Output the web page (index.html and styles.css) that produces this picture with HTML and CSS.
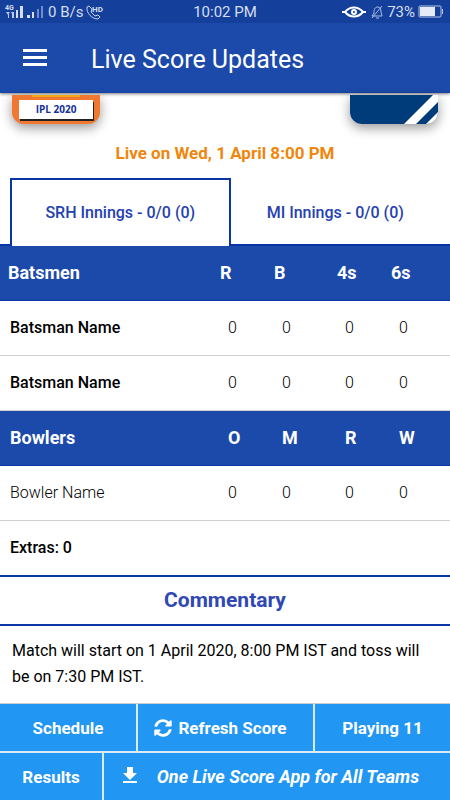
FILE: index.html
```html
<!DOCTYPE html>
<html lang="en">
<head>
  <meta charset="UTF-8">
  <title>Live Score Updates</title>
  <meta name="viewport" content="width=device-width, initial-scale=1.0">
  <link rel="stylesheet" href="styles.css">
</head>
<body>
<header class="top">
  <div class="status">
    <div class="status-left">
      <svg width="48" height="16" viewBox="0 2 48 16" aria-hidden="true">
        <text x="5" y="8" class="net">4G</text>
        <path d="M6 10h4l-2 3zM8 12h1v4H8zM11 10h3v6h-2v-4z" fill="#b9c8ec"/>
        <path d="M16 8h2v8h-2zM20 4h3v12h-3z" fill="#d5def3"/>
        <path d="M27 13h3v3h-3zM32 10h2v6h-2z" fill="#d5def3"/>
        <path d="M37 7h2v9h-2zM41 4h2v12h-2z" fill="#6f8ccd"/>
      </svg>
      <span>0 B/s</span>
      <svg width="22" height="16" viewBox="0 0 22 16" aria-hidden="true">
        <path d="M4 3l2-1 3 3-1 3 4 4 3-1 2 2-2 2c-6 0-12-6-11-12z" fill="none" stroke="#c5d1ee"/>
        <text x="9" y="8" class="hd">HD</text>
      </svg>
    </div>
    <span>10:02 PM</span>
    <div class="status-right">
      <svg width="26" height="14" viewBox="0 0 26 14" aria-hidden="true">
        <path d="M1 7h3c5-6 13-6 18 0h3M4 7c5 6 13 6 18 0" fill="none" stroke="#fff" stroke-width="2"/>
        <circle cx="13" cy="7" r="2" fill="none" stroke="#fff" stroke-width="2"/>
      </svg>
      <svg width="14" height="14" viewBox="0 0 14 14" aria-hidden="true">
        <path d="M2 11l2-3c0-4 1-6 4-6 2 0 3 2 3 5l1 4zM6 13h3M12 1L2 13" fill="none" stroke="#aabce5"/>
      </svg>
      <span>73%</span>
      <svg width="26" height="13" viewBox="0 0 26 13" aria-hidden="true">
        <rect x="1" y="1" width="22" height="11" rx="1" fill="none" stroke="#b7c5ea"/>
        <path d="M2 2h15v9H2z" fill="#e6ebf8"/>
        <path d="M24 4h1v5h-1z" fill="#b7c5ea"/>
      </svg>
    </div>
  </div>
  <div class="appbar">
    <button class="menu" aria-label="Menu">
      <svg width="24" height="18" viewBox="0 0 24 18"><path d="M0 0h24v3H0zM0 7h24v3H0zM0 14h24v3H0z" fill="#fff"/></svg>
    </button>
    <h1>Live Score Updates</h1>
  </div>
</header>

<main>
  <div class="teams">
    <div class="logo srh"><span>IPL 2020</span></div>
    <div class="logo mi">
      <svg width="88" height="29" viewBox="0 0 88 29" aria-hidden="true">
        <path d="M0 0h88v29H0z" fill="#003b7a"/>
        <path d="M83 0h5v7L66 29H54z" fill="#fff"/>
        <path d="M88 17v12H76z" fill="#fff"/>
      </svg>
    </div>
  </div>
  <p class="date">Live on Wed, 1 April 8:00 PM</p>

  <div class="tabs">
    <button class="tab active">SRH Innings - 0/0 (0)</button>
    <button class="tab">MI Innings - 0/0 (0)</button>
  </div>

  <table class="score">
    <colgroup><col class="c-name"><col class="c-a"><col class="c-b"><col class="c-c"><col class="c-d"></colgroup>
    <thead class="bat">
      <tr><th>Batsmen</th><th>R</th><th>B</th><th>4s</th><th>6s</th></tr>
    </thead>
    <tbody>
      <tr><td class="strong">Batsman Name</td><td>0</td><td>0</td><td>0</td><td>0</td></tr>
      <tr><td class="strong">Batsman Name</td><td>0</td><td>0</td><td>0</td><td>0</td></tr>
      <tr><th>Bowlers</th><th>O</th><th>M</th><th>R</th><th>W</th></tr>
      <tr><td>Bowler Name</td><td>0</td><td>0</td><td>0</td><td>0</td></tr>
      <tr><td class="strong" colspan="5">Extras: 0</td></tr>
    </tbody>
  </table>

  <h2>Commentary</h2>
  <p class="comment">Match will start on 1 April 2020, 8:00 PM IST and toss will be on 7:30 PM IST.</p>
</main>

<nav class="bottom">
  <div class="nav-row first">
    <button>Schedule</button>
    <button class="refresh">
      <svg width="18" height="18" viewBox="0 0 512 512" aria-hidden="true"><path fill="#fff" d="M371 134c-32-30-73-46-116-46-78 0-144 53-163 125-1 6-6 10-12 10H24c-8 0-13-7-12-14C33 94 135 8 256 8c66 0 127 26 171 69l36-36c15-15 41-4 41 17v134c0 13-11 24-24 24H346c-21 0-32-26-17-41l42-41zM32 296h134c21 0 32 26 17 41l-42 41c32 30 73 46 116 46 78 0 144-53 163-125 1-6 6-10 12-10h56c8 0 13 7 12 14-21 115-123 201-244 201-66 0-127-26-171-69l-36 36C34 486 8 475 8 454V320c0-13 11-24 24-24z"/></svg>
      Refresh Score
    </button>
    <button>Playing 11</button>
  </div>
  <div class="nav-row second">
    <button>Results</button>
    <button class="promo">
      <svg width="14" height="20" viewBox="0 0 14 20" aria-hidden="true"><path d="M4 0h6v6h4l-7 7-7-7h4zM0 14h14v2H0z" fill="#fff"/></svg>
      <span>One Live Score App for All Teams</span>
    </button>
  </div>
</nav>
</body>
</html>
```
FILE: styles.css
```css
* { box-sizing: border-box; }
body {
  margin: 0;
  min-height: 100vh;
  display: flex;
  flex-direction: column;
  background: #fff;
  color: #000;
  font-family: Roboto, sans-serif;
}
button {
  border: none;
  padding: 0;
  font-family: inherit;
  cursor: pointer;
}
h1, h2, p { margin: 0; }
svg { flex: none; }

.top {
  background: #1c4aaa;
  color: #fff;
  border-bottom: 1px solid #1643a4;
  box-shadow: 0 1px 3px rgba(0, 0, 0, 0.5);
}
.status {
  height: 23px;
  display: grid;
  grid-template-columns: 1fr auto 1fr;
  align-items: center;
  background: #14409b;
  color: #d5def3;
  font-size: 15px;
}
.status-left, .status-right {
  display: flex;
  align-items: center;
  gap: 3px;
}
.status-left { gap: 0; }
.status-right { justify-content: flex-end; padding-right: 6px; }
.net { font-size: 7px; font-weight: bold; fill: #d5def3; }
.hd { font-size: 8px; font-weight: bold; fill: #d5def3; }
.appbar {
  height: 69px;
  display: flex;
  align-items: center;
  gap: 44px;
  padding: 3px 23px 0;
}
.menu { display: flex; padding-bottom: 3px; background: none; }
h1 { font-size: 25px; font-weight: 400; }

.teams {
  display: flex;
  justify-content: space-between;
  padding: 2px 12px 0;
}
.logo {
  width: 88px;
  height: 29px;
  border-radius: 0 0 12px 12px;
  overflow: hidden;
  box-shadow: 0 4px 12px rgba(0, 0, 0, 0.4);
}
.srh {
  padding: 0 7px;
  background: linear-gradient(#f0a818, #f0a818) center top / 48px 2px no-repeat #f07830;
}
.srh span {
  display: block;
  margin-top: 5px;
  background: #fff;
  box-shadow: 1px 2px #222;
  color: #14309a;
  font: bold 10px/19px "Open Sans", sans-serif;
  text-align: center;
}
.date {
  padding-top: 18px;
  color: #f0860c;
  font-size: 17px;
  font-weight: bold;
  line-height: 22px;
  text-align: center;
}

.tabs {
  display: flex;
  margin-top: 14px;
  padding: 0 10px;
  border-bottom: 2px solid #0a35a5;
}
.tab {
  flex: 1;
  height: 66px;
  padding-top: 2px;
  background: #fff;
  color: #2541b2;
  font-size: 16px;
  font-weight: 500;
}
.active {
  flex: none;
  width: 49vw;
  height: 68px;
  margin-bottom: -2px;
  padding: 0 0 2px;
  border: 2px solid #0a35a5;
  border-bottom: none;
}

.score {
  width: 100%;
  table-layout: fixed;
  border-collapse: collapse;
}
.c-name { width: 48%; }
.c-a { width: 12%; }
.c-b { width: 14%; }
.c-c { width: 12%; }
.score th, .score td {
  height: 55px;
  padding: 0 0 0 12px;
  text-align: left;
}
.score th {
  background: #1c4aaa;
  color: #fff;
  font-size: 18px;
  font-weight: bold;
  border-bottom: 1px solid #0a35a5;
}
.score th:first-child, .score td:first-child { padding-left: 10px; }
.score .bat th { height: 54px; padding-left: 4px; }
.score .bat th:first-child { padding-left: 8px; }
.score td {
  font-size: 16px;
  font-weight: 300;
  border-bottom: 1px solid #d0d0d0;
}
.score .strong { font-weight: 500; }
.score tr:last-child td { border-bottom: none; }

h2 {
  border-top: 2px solid #0a35a5;
  border-bottom: 2px solid #0a35a5;
  color: #2f48b4;
  font-size: 21px;
  font-weight: bold;
  line-height: 47px;
  text-align: center;
}
.comment {
  padding: 12px;
  font-size: 16px;
  line-height: 26px;
}

.bottom {
  display: grid;
  gap: 2px;
  margin-top: auto;
  background: #d8ebfb;
  border-top: 1px solid #ccc;
}
.nav-row { display: grid; gap: 2px; }
.first { grid-template-columns: 136fr 175fr 135fr; }
.second { grid-template-columns: 102fr 346fr; }
.nav-row button {
  height: 47px;
  display: flex;
  align-items: center;
  justify-content: center;
  gap: 6px;
  background: #2196f3;
  color: #fff;
  font-size: 17px;
  font-weight: bold;
}
.nav-row .refresh { padding-right: 10px; }
.nav-row .promo {
  gap: 20px;
  padding-right: 12px;
  font-size: 18px;
  font-style: italic;
}
```
